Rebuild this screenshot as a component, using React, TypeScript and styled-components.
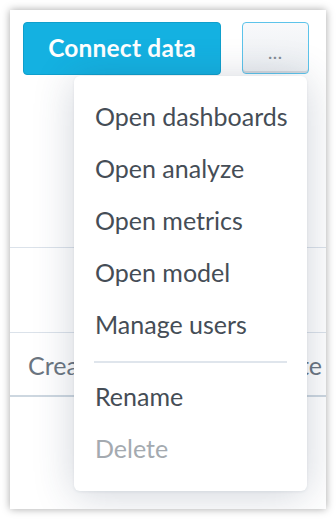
import React from "react";
import styled, { createGlobalStyle } from "styled-components";

const Global = createGlobalStyle`
  html, body { margin: 0; padding: 0; background: #ffffff; }
  body { font-family: Lato, "Noto Sans", sans-serif; }
`;

const Frame = styled.div`
  position: relative;
  margin: 10px;
  width: 316px;
  height: 499px;
  background: #ffffff;
  box-shadow: 0 0 8px rgba(0, 0, 0, 0.35);
  overflow: hidden;
  display: flex;
  flex-direction: column;
`;

const Toolbar = styled.div`
  display: flex;
  align-items: flex-start;
  gap: 21px;
  padding: 12px 17px 0 13px;
`;

const ConnectButton = styled.button`
  width: 198px;
  height: 53px;
  border: 1px solid #0f9fcc;
  border-radius: 4px;
  background: #14b1e1;
  color: #ffffff;
  font-family: Lato, sans-serif;
  font-weight: 700;
  font-size: 24.5px;
  letter-spacing: 0.2px;
  padding: 0 0 2px;
`;

const MoreButton = styled.button`
  width: 67px;
  height: 52px;
  border: 1px solid #5cc3ea;
  border-radius: 4px;
  background: linear-gradient(#f8f9fb, #eceff2);
  box-shadow: inset 0 -2px 0 #d3d8de;
  color: #838c95;
  font-family: Lato, sans-serif;
  font-size: 16px;
  font-weight: 700;
  padding: 8px 0 0;
  letter-spacing: 1px;
`;

const Spacer = styled.div`
  height: 172px;
  border-bottom: 1px solid #dbe2ea;
`;

const BlankRow = styled.div`
  height: 84px;
  border-bottom: 1px solid #dbe2ea;
`;

const HeaderRow = styled.div`
  height: 60px;
  display: flex;
  align-items: center;
  justify-content: space-between;
  padding: 2px 4px 0 18px;
  border-bottom: 2px solid #cdd7e0;
  color: #6b7580;
  font-size: 25px;
`;

const Menu = styled.div`
  position: absolute;
  left: 64px;
  top: 66px;
  width: 233px;
  padding: 16px 0 15px;
  background: #ffffff;
  border-radius: 6px;
  box-shadow: 0 4px 40px rgba(40, 60, 90, 0.22), 0 1px 3px rgba(40, 60, 90, 0.08);
  display: flex;
  flex-direction: column;
`;

const Item = styled.div<{ $disabled?: boolean }>`
  height: 52px;
  display: flex;
  align-items: center;
  padding: 0 10px 4px 21px;
  box-sizing: border-box;
  font-size: 25px;
  color: ${(p) => (p.$disabled ? "#a4aab0" : "#454d56")};
  white-space: nowrap;
`;

const Divider = styled.div`
  height: 2px;
  margin: 9px 20px 9px 20px;
  background: #dfe5ec;
`;

export default function App() {
  return (
    <>
      <Global />
      <Frame>
        <Toolbar>
          <ConnectButton>Connect data</ConnectButton>
          <MoreButton>...</MoreButton>
        </Toolbar>
        <Spacer />
        <BlankRow />
        <HeaderRow>
          <span>Created</span>
          <span>Date</span>
        </HeaderRow>
        <Menu>
          <Item>Open dashboards</Item>
          <Item>Open analyze</Item>
          <Item>Open metrics</Item>
          <Item>Open model</Item>
          <Item>Manage users</Item>
          <Divider />
          <Item>Rename</Item>
          <Item $disabled>Delete</Item>
        </Menu>
      </Frame>
    </>
  );
}
